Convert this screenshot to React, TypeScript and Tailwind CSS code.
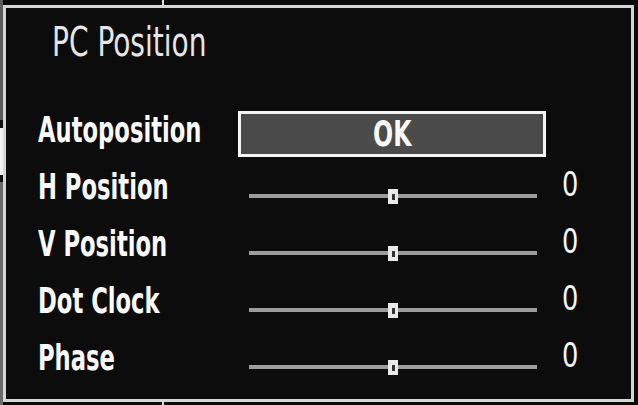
const font = "font-['DejaVu_Sans_Condensed','DejaVu_Sans',sans-serif]"

function Label({ text }: { text: string }) {
  return (
    <span className="inline-block origin-left scale-x-[0.72] whitespace-nowrap text-[35px] leading-[35px] font-bold text-[#fafafa]">
      {text}
    </span>
  )
}

function Slider({ label, value }: { label: string; value: string }) {
  return (
    <div className="flex items-start h-[57px]">
      <div className="w-[211px] pt-[7px]">
        <Label text={label} />
      </div>
      <div className="relative w-[288px] h-[4px] mt-[31px] bg-[#9c9c9c]">
        <div className="absolute left-[139px] top-[-5px] w-[10px] h-[15px] bg-[#e9e9e9] flex items-center justify-center">
          <div className="w-[3px] h-[6px] bg-[#333]" />
        </div>
      </div>
      <div className="ml-[25px] pt-[4px]">
        <span className="inline-block origin-left scale-x-[0.84] text-[34px] leading-[34px] text-[#f4f4f4]">{value}</span>
      </div>
    </div>
  )
}

export default function App() {
  return (
    <div className={`relative w-[638px] h-[405px] bg-[#0a0a0a] flex overflow-hidden ${font}`}>
      {/* left edge of the screen behind the menu */}
      <div className="w-[3px] flex flex-col">
        <div className="h-[120px] bg-[#5c5c5c]" />
        <div className="h-[8px] bg-[#111]" />
        <div className="h-[47px] bg-[#f2f2f2]" />
        <div className="h-[7px] bg-[#111]" />
        <div className="flex-1 bg-[#6a6a6a]" />
      </div>

      <div className="flex-1 pt-[5px] pr-[4px] pb-[3px]">
        <div className="h-full border-[3px] border-[#d6d6d6] bg-[#0c0c0c] flex flex-col">
          {/* Title */}
          <div className="h-[98px] pt-[14px] pl-[46px]">
            <span className="inline-block origin-left scale-x-[0.76] whitespace-nowrap text-[41px] leading-[41px] text-[#e6e6e6]">
              PC Position
            </span>
          </div>

          <div className="pl-[32px] flex flex-col">
            {/* Autoposition */}
            <div className="flex items-start h-[57px]">
              <div className="w-[200px] pt-[7px]">
                <Label text="Autoposition" />
              </div>
              <div className="w-[308px] h-[46px] mt-[5px] border-[3px] border-[#f4f4f4] bg-[#4b4b4b] flex items-center justify-center">
                <span className="inline-block scale-x-[0.73] text-[36px] leading-[36px] font-bold text-[#fafafa]">OK</span>
              </div>
            </div>

            <Slider label="H Position" value="0" />
            <Slider label="V Position" value="0" />
            <Slider label="Dot Clock" value="0" />
            <Slider label="Phase" value="0" />
          </div>
        </div>
      </div>

      {/* tick marks of the screen behind */}
      <div className="absolute left-[162px] top-0 w-[2px] h-[5px] bg-[#e0e0e0]" />
      <div className="absolute left-[162px] bottom-0 w-[2px] h-[3px] bg-[#e0e0e0]" />
    </div>
  )
}
